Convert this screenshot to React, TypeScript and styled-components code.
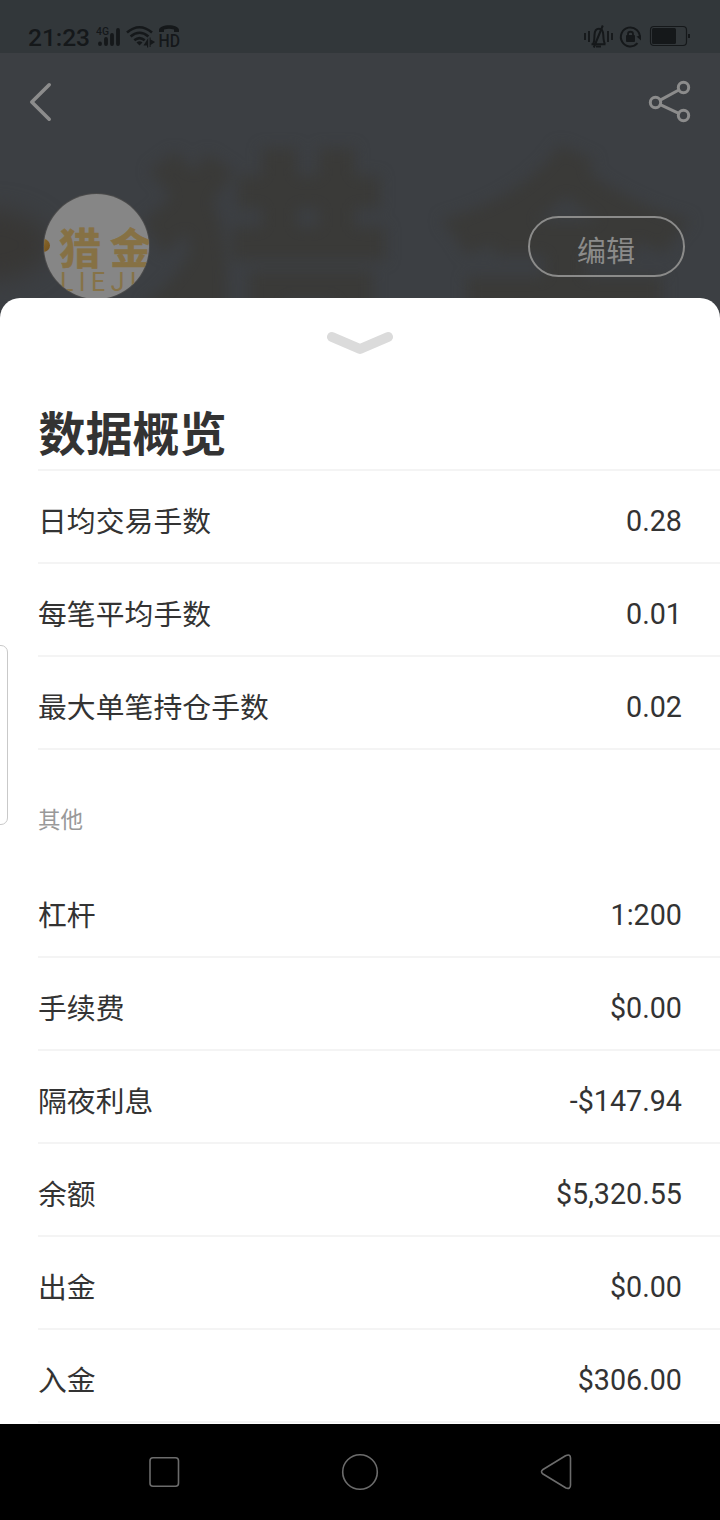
import React from "react";
import styled, { createGlobalStyle } from "styled-components";

const GlobalStyle = createGlobalStyle`
  * { box-sizing: border-box; }
  body {
    margin: 0;
    background: #3c3f43;
    font-family: Roboto, "Noto Sans CJK SC", sans-serif;
    color: #333;
  }
`;

const Screen = styled.div`
  position: relative;
  display: flex;
  flex-direction: column;
  width: 720px;
  height: 1520px;
  overflow: hidden;
  background: #3c3f43;
`;

const Backdrop = styled.div`
  position: absolute;
  left: 0;
  top: 53px;
  width: 720px;
  height: 265px;
  overflow: hidden;
`;

const BackdropText = styled.span<{ $left: number }>`
  position: absolute;
  left: ${(p) => p.$left}px;
  top: 74px;
  font: 900 256px/258px "Noto Sans CJK SC", sans-serif;
  color: #3a3a38;
  filter: blur(7px);
`;

const BackdropDot = styled.div`
  position: absolute;
  left: -70px;
  top: 156px;
  width: 120px;
  height: 72px;
  border-radius: 50%;
  background: #383735;
  filter: blur(12px);
`;

const StatusBar = styled.div`
  display: flex;
  align-items: center;
  justify-content: space-between;
  flex: none;
  height: 53px;
  padding: 21px 29px 0 28px;
  background: #32373a;
  color: #15181a;
`;

const StatusGroup = styled.div`
  display: flex;
  align-items: center;
`;

const Clock = styled.span`
  width: 68px;
  padding-top: 1px;
  font-size: 24.6px;
  line-height: 29px;
  font-weight: 500;
  letter-spacing: -0.1px;
  white-space: nowrap;
`;

const Hero = styled.header`
  position: relative;
  flex: none;
  height: 245px;
`;

const HeroNav = styled.div`
  display: flex;
  align-items: center;
  justify-content: space-between;
  height: 98px;
  padding: 0 28px;
`;

const Profile = styled.div`
  display: flex;
  align-items: flex-start;
  justify-content: space-between;
  padding: 43px 35px 0 44px;
`;

const Avatar = styled.div`
  position: relative;
  width: 105px;
  height: 105px;
  border-radius: 50%;
  overflow: hidden;
  background: #868686;
  box-shadow: 0 0 0 1px #4a4a4a;
`;

const AvatarDot = styled.i`
  position: absolute;
  left: -7px;
  top: 45px;
  width: 13px;
  height: 13px;
  border-radius: 50%;
  background: linear-gradient(135deg, #8f7030, #73501c);
`;

const AvatarName = styled.div`
  position: absolute;
  left: 15px;
  top: 21px;
  font: 700 42px/62px "Noto Sans CJK SC", sans-serif;
  letter-spacing: 9px;
  white-space: nowrap;
  color: #867144;
  -webkit-text-stroke: 0.6px #867144;
`;

const AvatarLatin = styled.div`
  position: absolute;
  left: 16px;
  top: 76px;
  font: 400 25px/25px Roboto, sans-serif;
  letter-spacing: 5.4px;
  white-space: nowrap;
  color: #867348;
`;

const EditButton = styled.button`
  width: 157px;
  height: 61px;
  margin-top: 22px;
  padding: 5px 1px 0 0;
  border: 2px solid #8b8b8a;
  border-radius: 31px;
  background: transparent;
  color: #8b8b8a;
  font: 400 29px/43px "Noto Sans CJK SC", sans-serif;
`;

const Sheet = styled.main`
  position: relative;
  display: flex;
  flex-direction: column;
  flex: 1;
  border-radius: 20px 20px 0 0;
  background: #fff;
  overflow: hidden;
`;

const Handle = styled.div`
  display: flex;
  justify-content: center;
  height: 92px;
  padding-top: 32px;
`;

const Title = styled.h1`
  height: 81px;
  margin: 0 0 0 38px;
  padding: 6px 0 0 0.6px;
  border-bottom: 2px solid #f4f4f4;
  font: 700 47px/70px "Noto Sans CJK SC", sans-serif;
`;

const Row = styled.div`
  display: flex;
  align-items: center;
  justify-content: space-between;
  height: 93px;
  margin-left: 38px;
  padding: 8px 38px 0 0;
  border-bottom: 2px solid #f4f4f4;
`;

const Label = styled.span`
  padding-bottom: 2px;
  font: 400 28.8px/42px "Noto Sans CJK SC", sans-serif;
  letter-spacing: 0.06px;
`;

const Value = styled.span`
  font: 400 28.7px/42px Roboto, sans-serif;
`;

const SectionLabel = styled.h2`
  height: 115px;
  margin: 0 0 0 38px;
  padding-top: 51px;
  font: 400 22.5px/34px "Noto Sans CJK SC", sans-serif;
  color: #999;
`;

const EdgeTab = styled.div`
  position: absolute;
  left: -10px;
  top: 645px;
  width: 18px;
  height: 180px;
  border: 1px solid #c9c9c9;
  border-radius: 7px;
  background: #fff;
`;

const NavBar = styled.nav`
  display: flex;
  align-items: center;
  justify-content: space-between;
  flex: none;
  height: 96px;
  padding: 0 145px;
  background: #000;
`;

const StrokeIcon = styled.svg`
  display: block;
  flex: none;
  fill: none;
  stroke-linecap: round;
  stroke-linejoin: round;
`;

const summary: [string, string][] = [
  ["日均交易手数", "0.28"],
  ["每笔平均手数", "0.01"],
  ["最大单笔持仓手数", "0.02"],
];

const others: [string, string][] = [
  ["杠杆", "1:200"],
  ["手续费", "$0.00"],
  ["隔夜利息", "-$147.94"],
  ["余额", "$5,320.55"],
  ["出金", "$0.00"],
  ["入金", "$306.00"],
];

const NetworkIcons = () => (
  <StrokeIcon width="86" height="26" viewBox="96 24 86 26" stroke="#15181a">
    <text x="96" y="35" fontSize="11" fontWeight="500" fill="#15181a" stroke="none" fontFamily="Roboto" textLength="13" lengthAdjust="spacingAndGlyphs">4G</text>
    <g strokeWidth="3.800">
      <path d="M100 43.500v.5M106 39v5M112 35v9M118 30v14" />
    </g>
    <g strokeWidth="2.600" strokeLinecap="butt">
      <path d="M127 32.500q12.500-10.500 25 0M130.600 36.500q9-7.500 17.800 0M134.300 40.300q5.200-4.500 10.400 0" />
    </g>
    <path d="M136.500 42.500q3-2.500 6 0l-3 3z" fill="#15181a" stroke="none" />
    <path d="M148.200 38v9.500h-1.200v-2h-3.500zM149.600 37.500h1v2l4.500 2.500-4.500 3v2h-1z" fill="#15181a" stroke="none" />
    <path d="M159 32v-2c0-6.500 20-6.500 20 0v2h-5v-2.500q-5-1.500-10 0v2.500z" fill="#15181a" stroke="none" />
    <text x="158.500" y="47" fontSize="18" fontWeight="500" fill="#15181a" stroke="none" fontFamily="Roboto" textLength="21.500" lengthAdjust="spacingAndGlyphs">HD</text>
  </StrokeIcon>
);

const DeviceIcons = () => (
  <StrokeIcon width="107" height="26" viewBox="584 24 107 26" stroke="#15181a">
    <g strokeWidth="1.800" strokeLinecap="butt">
      <path d="M585 33v7M589 31v11M608 31v11M612 33v7" />
    </g>
    <g strokeWidth="2" strokeLinecap="butt">
      <path d="M591.500 44.300h14M593 44c1.500-2 1.300-5 1.500-9 .3-8.500 8.500-8.500 8.800 0 .2 4 .2 7 1.700 9" />
      <path d="M602.800 25.500l-9 22M596 46.500h5" />
    </g>
    <path d="M637.500 43.200a9.500 9.500 0 1 1 2.300-5.200" strokeWidth="2" strokeLinecap="butt" />
    <path d="M636.500 36.500l4.500-1v5z" fill="#15181a" stroke="none" />
    <rect x="626" y="35" width="9" height="7" rx="1" fill="#15181a" stroke="none" />
    <path d="M628 36v-2c0-3 5-3 5 0v2" strokeWidth="1.800" />
    <rect x="650.500" y="26.500" width="36" height="19" rx="3.500" strokeWidth="1.200" />
    <rect x="652" y="28" width="24" height="16" rx="1.500" fill="#15181a" stroke="none" />
    <rect x="688" y="34" width="2" height="4" fill="#15181a" stroke="none" />
  </StrokeIcon>
);

const DataRows = ({ items }: { items: [string, string][] }) => (
  <>
    {items.map(([label, value]) => (
      <Row key={label}>
        <Label>{label}</Label>
        <Value>{value}</Value>
      </Row>
    ))}
  </>
);

export default function App() {
  return (
    <>
      <GlobalStyle />
      <Screen>
        <Backdrop>
          <BackdropDot />
          <BackdropText $left={138}>猎</BackdropText>
          <BackdropText $left={437}>金</BackdropText>
        </Backdrop>
        <StatusBar>
          <StatusGroup>
            <Clock>21:23</Clock>
            <NetworkIcons />
          </StatusGroup>
          <DeviceIcons />
        </StatusBar>
        <Hero>
          <HeroNav>
            <StrokeIcon width="26" height="42" viewBox="28 81 26 42" stroke="#8c8c8c" strokeWidth="3.600">
              <path d="M49.200 84.800L31.800 102l17.400 17.200" />
            </StrokeIcon>
            <StrokeIcon width="44" height="44" viewBox="648 80 44 44" stroke="#8c8c8c" strokeWidth="3">
              <circle cx="683.500" cy="87.500" r="5.200" />
              <circle cx="655.500" cy="102.500" r="5.200" />
              <circle cx="683.500" cy="115.500" r="5.200" />
              <path d="M660.200 100.100L678.800 90M660.200 104.700l18.600 8.600" />
            </StrokeIcon>
          </HeroNav>
          <Profile>
            <Avatar>
              <AvatarDot />
              <AvatarName>猎金</AvatarName>
              <AvatarLatin>LIEJIN</AvatarLatin>
            </Avatar>
            <EditButton>编辑</EditButton>
          </Profile>
        </Hero>
        <Sheet>
          <Handle>
            <StrokeIcon width="68" height="26" viewBox="326 330 68 26" stroke="#dbdbdb" strokeWidth="10">
              <path d="M332 337l28 12 28-12" />
            </StrokeIcon>
          </Handle>
          <Title>数据概览</Title>
          <DataRows items={summary} />
          <SectionLabel>其他</SectionLabel>
          <DataRows items={others} />
        </Sheet>
        <NavBar>
          <StrokeIcon width="38" height="38" viewBox="145 1453 38 38" stroke="#6c6c6c" strokeWidth="1.600">
            <rect x="150" y="1457.800" width="28.500" height="28.500" rx="3" />
          </StrokeIcon>
          <StrokeIcon width="38" height="38" viewBox="341 1453 38 38" stroke="#6c6c6c" strokeWidth="1.600">
            <circle cx="360" cy="1472" r="17.300" />
          </StrokeIcon>
          <StrokeIcon width="38" height="38" viewBox="537 1453 38 38" stroke="#6c6c6c" strokeWidth="1.600">
            <path d="M543 1469.500L565.500 1455.800Q570.500 1453.500 570.500 1458V1485Q570.500 1489.500 566 1488L543 1474Q540 1471.700 543 1469.500Z" />
          </StrokeIcon>
        </NavBar>
        <EdgeTab />
      </Screen>
    </>
  );
}
